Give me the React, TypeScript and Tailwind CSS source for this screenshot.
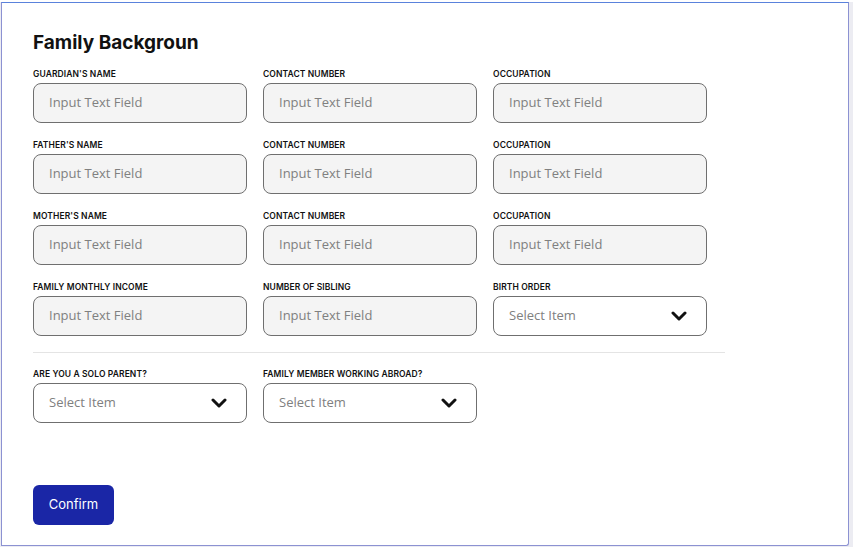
import React from "react";

const rows = [
  [
    { label: "GUARDIAN'S NAME", kind: "input" },
    { label: "CONTACT NUMBER", kind: "input" },
    { label: "OCCUPATION", kind: "input" },
  ],
  [
    { label: "FATHER'S NAME", kind: "input" },
    { label: "CONTACT NUMBER", kind: "input" },
    { label: "OCCUPATION", kind: "input" },
  ],
  [
    { label: "MOTHER'S NAME", kind: "input" },
    { label: "CONTACT NUMBER", kind: "input" },
    { label: "OCCUPATION", kind: "input" },
  ],
  [
    { label: "FAMILY MONTHLY INCOME", kind: "input" },
    { label: "NUMBER OF SIBLING", kind: "input" },
    { label: "BIRTH ORDER", kind: "select" },
  ],
];

function Chevron() {
  return (
    <svg width="16" height="10" viewBox="0 0 16 10" fill="none">
      <path d="M2 2l6 6 6-6" stroke="#111" strokeWidth="3" strokeLinecap="round" strokeLinejoin="round" />
    </svg>
  );
}

function Field({ label, kind }: { label: string; kind: string }) {
  return (
    <div className="flex flex-col w-[214px]">
      <span className="text-[8.5px] font-semibold text-[#111] leading-[10px] tracking-[0.1px] mb-[4px]">{label}</span>
      {kind === "input" ? (
        <div className="h-[40px] rounded-[8px] border border-[#6f6f6f] bg-[#f4f4f4] flex items-center px-[15px] text-[13px] text-[#808080] font-['Open_Sans',sans-serif]">
          Input Text Field
        </div>
      ) : (
        <div className="h-[40px] rounded-[8px] border border-[#6f6f6f] bg-white flex items-center justify-between pl-[15px] pr-[19px] text-[13px] text-[#808080] font-['Open_Sans',sans-serif]">
          <span>Select Item</span>
          <Chevron />
        </div>
      )}
    </div>
  );
}

export default function App() {
  return (
    <div className="w-[853px] h-[547px] bg-[#ececf2] font-['Inter',sans-serif]">
      <div className="ml-[1px] mt-[2px] w-[848px] h-[544px] bg-white border border-[#8c92d2] border-t-[#5a82dc] border-t-dashed rounded-br-[3px] flex flex-col pl-[31px] pt-[28px]">
        <h1 className="text-[19px] font-bold text-[#111] leading-[24px] mb-[14px]">Family Backgroun</h1>
        <div className="flex flex-col gap-[17px] w-[674px]">
          {rows.map((row, i) => (
            <div key={i} className="flex gap-[16px]">
              {row.map((f, j) => (
                <Field key={j} label={f.label} kind={f.kind} />
              ))}
            </div>
          ))}
        </div>
        <div className="w-[692px] h-px bg-[#e4e4e4] mt-[16px] mb-[16px]" />
        <div className="flex gap-[16px]">
          <Field label="ARE YOU A SOLO PARENT?" kind="select" />
          <Field label="FAMILY MEMBER WORKING ABROAD?" kind="select" />
        </div>
        <button className="mt-[62px] w-[81px] h-[40px] rounded-[6px] bg-[#1a26a6] text-white text-[13px] font-normal self-start">
          Confirm
        </button>
      </div>
    </div>
  );
}
